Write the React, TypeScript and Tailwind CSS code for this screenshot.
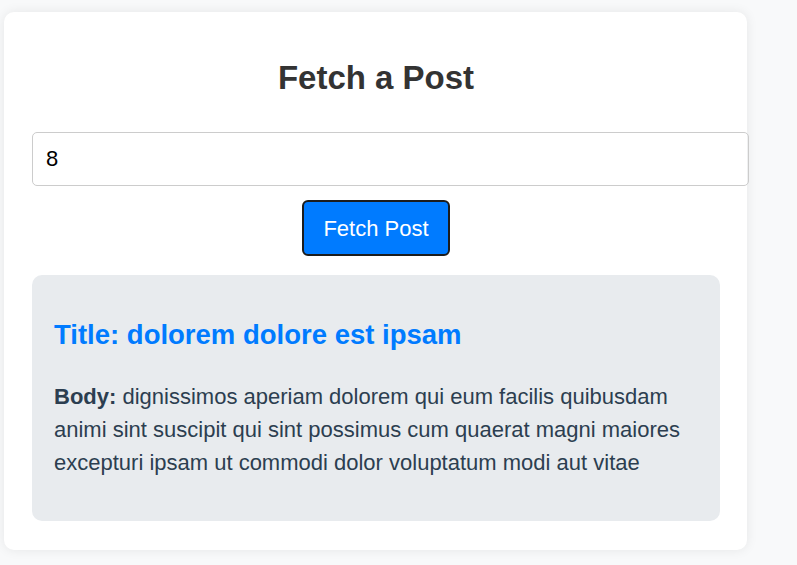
export default function App() {
  return (
    <div className="min-h-[565px] w-[797px] bg-[#f8f9fa] pt-[12px] pl-[4px] font-['Liberation_Sans',Arial,sans-serif]">
      <div className="w-[743px] h-[538px] rounded-[10px] bg-white pl-[28px] pr-[27px] pt-[28px] shadow-[0_0_12px_rgba(0,0,0,0.08)]">
        <h1 className="mt-[19px] mb-[35px] text-center text-[33px] leading-[38px] font-bold text-[#333]">Fetch a Post</h1>
        <input
          type="number"
          defaultValue="8"
          className="block h-[54px] w-[717px] rounded-[5px] border border-[#ccc] px-[13px] text-[22px] text-black outline-none"
        />
        <div className="mt-[14px] flex justify-center">
          <button className="h-[56px] w-[148px] rounded-[6px] border-2 border-[#1c1c1c] bg-[#007bff] text-[22px] text-white">
            Fetch Post
          </button>
        </div>
        <div className="mt-[19px] h-[246px] w-[688px] rounded-[10px] bg-[#e8ebee] px-[22px] pt-[22px]">
          <h3 className="mt-[22px] mb-[29px] text-[27.5px] leading-[32px] font-bold text-[#007bff]">
            Title: dolorem dolore est ipsam
          </h3>
          <p className="text-[22px] leading-[33px] text-[#2c3e50]">
            <strong className="font-bold">Body:</strong>{" "}
            dignissimos aperiam dolorem qui eum facilis quibusdam animi sint suscipit qui sint possimus cum quaerat magni maiores excepturi ipsam ut commodi dolor voluptatum modi aut vitae
          </p>
        </div>
      </div>
    </div>
  );
}
